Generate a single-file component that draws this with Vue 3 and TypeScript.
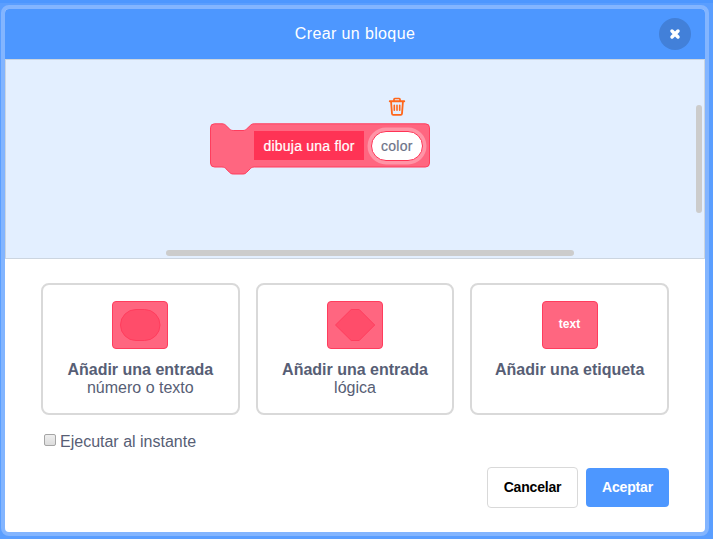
<script setup lang="ts">
import { ref } from 'vue'

interface InputOption {
  kind: 'round' | 'boolean' | 'label'
  title: string
  detail?: string
}

const options: InputOption[] = [
  { kind: 'round', title: 'Añadir una entrada', detail: 'número o texto' },
  { kind: 'boolean', title: 'Añadir una entrada', detail: 'lógica' },
  { kind: 'label', title: 'Añadir una etiqueta' },
]

const runInstantly = ref(false)
</script>

<template>
  <div class="overlay">
    <section class="modal">
      <header class="header">
        <h1 class="title">Crear un bloque</h1>
        <button class="close" aria-label="Cerrar">
          <svg width="12" height="12" viewBox="0 0 12 12">
            <path d="M3 3L9 9M9 3L3 9" stroke="#fff" stroke-width="3.5" stroke-linecap="round" />
          </svg>
        </button>
      </header>

      <div class="workspace">
        <svg class="canvas" width="698" height="198" viewBox="6 60 698 198">
          <path
            class="block"
            d="M210.500 127.800a4 4 0 0 1 4-4H222c2 0 3 .7 4 1.800l3.600 3.400c1 1 2 1.500 3.600 1.500H243c1.600 0 2.600-.5 3.600-1.500l3.600-3.400c1-1.100 2-1.800 4-1.800H425.500a4 4 0 0 1 4 4V163a4 4 0 0 1-4 4H254.200c-2 0-3 .7-4 1.800l-3.600 3.600c-1 1-2 1.600-3.600 1.600H233.200c-1.600 0-2.600-.6-3.600-1.600l-3.600-3.600c-1-1.100-2-1.800-4-1.800H214.500a4 4 0 0 1-4-4Z"
          />
          <rect x="254" y="131" width="110" height="29" fill="#ff3355" />
          <text class="block-text" x="263.500" y="151" textLength="91">dibuja una flor</text>
          <rect x="367.500" y="127.500" width="59" height="37" rx="18.500" fill="#fff" fill-opacity=".3" />
          <rect x="371.500" y="131.500" width="51" height="29" rx="14.500" fill="#fff" stroke="#ff3355" />
          <text class="arg-text" x="381" y="151" textLength="31.500">color</text>
          <g fill="none" stroke="#ff661a" stroke-linecap="round" stroke-linejoin="round">
            <path d="M389.800 101.200H404.200" stroke-width="2" />
            <path d="M394 100.800V99.300q0-.8.800-.8h4.400q.8 0 .8.800v1.500" stroke-width="1.700" />
            <path d="M391.100 102l.9 11.700q.1 1.100 1.200 1.100h7.600q1.100 0 1.200-1.100l.9-11.700" stroke-width="1.800" />
            <path d="M394.300 105.200v5M397 105.200v5M399.700 105.200v5" stroke-width="1.600" />
          </g>
          <rect x="696" y="105" width="6" height="108" rx="3" fill="#ccc" />
          <rect x="166" y="250" width="408" height="6" rx="3" fill="#ccc" />
        </svg>
      </div>

      <div class="body">
        <div class="options">
          <button v-for="option in options" :key="option.kind" class="option">
            <svg class="option-icon" width="56" height="48" viewBox="0 0 56 48">
              <rect x=".5" y=".5" width="55" height="47" rx="3.500" fill="#ff6680" stroke="#ff3d5d" />
              <rect v-if="option.kind === 'round'" class="slot" x="8.500" y="8.500" width="39.500" height="31" rx="15.500" />
              <path v-else-if="option.kind === 'boolean'" class="slot" d="M24.200 8.500h8L47.700 24l-15.500 15.500h-8L8.500 24Z" />
              <text v-else class="icon-text" x="27.500" y="27" text-anchor="middle">text</text>
            </svg>
            <strong>{{ option.title }}</strong>
            <span v-if="option.detail">{{ option.detail }}</span>
          </button>
        </div>

        <label class="check-row">
          <input v-model="runInstantly" class="check" type="checkbox" />
          <span>Ejecutar al instante</span>
        </label>

        <div class="actions">
          <button class="cancel">Cancelar</button>
          <button class="accept">Aceptar</button>
        </div>
      </div>
    </section>
  </div>
</template>

<style>
body {
  margin: 0;
  overflow: hidden;
}
</style>

<style scoped>
.overlay {
  box-sizing: border-box;
  width: 713px;
  height: 539px;
  padding: 5px 4px 3px 1px;
  background: linear-gradient(#4d97ff 3px, #5a9eff 3px);
  font-family: "Liberation Sans", Arial, sans-serif;
  color: #575e75;
}
button {
  margin: 0;
  font-family: inherit;
  color: inherit;
}
.modal {
  box-sizing: border-box;
  width: 708px;
  height: 531px;
  overflow: hidden;
  border: 4px solid #83b5ff;
  border-radius: 8px;
  background: #fff;
}
.header {
  display: grid;
  grid-template-columns: 1fr auto 1fr;
  align-items: center;
  height: 50px;
  padding: 0 14px;
  background: #4d97ff;
}
.title {
  grid-column: 2;
  margin: 0;
  font-size: 16px;
  font-weight: 400;
  line-height: 18px;
  letter-spacing: 0.38px;
  color: #fff;
}
.close {
  display: grid;
  place-items: center;
  justify-self: end;
  width: 32px;
  height: 32px;
  padding: 0;
  border: 0;
  border-radius: 50%;
  background: #4280d9;
}
.workspace {
  box-sizing: border-box;
  height: 200px;
  border: 1px solid #ccd5e0;
  background: #e3efff;
}
.canvas {
  display: block;
}
.block {
  fill: #ff6680;
  stroke: #ff3d5d;
}
.block-text,
.arg-text {
  font-size: 14px;
  fill: #fff;
  stroke: #fff;
  stroke-width: 0.2px;
}
.arg-text {
  fill: #6d7388;
  stroke: #6d7388;
}
.body {
  padding: 24px 36px;
}
.options {
  display: grid;
  grid-template-columns: repeat(3, 1fr);
  gap: 16px;
}
.option {
  display: flex;
  flex-direction: column;
  align-items: center;
  box-sizing: border-box;
  height: 132px;
  padding: 16px 0;
  border: 2px solid #d9d9d9;
  border-radius: 8px;
  background: #fff;
  font-size: 16px;
  line-height: 18px;
}
.option-icon {
  flex: none;
  margin-bottom: 12px;
}
.slot {
  fill: #ff4d6a;
  stroke: #ff3d5d;
}
.icon-text {
  font-size: 12px;
  font-weight: 700;
  fill: #fff;
}
.check-row {
  display: flex;
  align-items: center;
  gap: 4px;
  height: 18px;
  margin-top: 18px;
  padding-left: 3px;
  font-size: 16px;
  line-height: 18px;
}
.check {
  appearance: none;
  box-sizing: border-box;
  width: 12px;
  height: 12px;
  margin: 0 0 4px;
  border: 1px solid #a5a5a5;
  border-radius: 2px;
  background: linear-gradient(#eee, #dcdcdc);
}
.actions {
  display: flex;
  justify-content: flex-end;
  align-items: center;
  gap: 8px;
  margin-top: 16px;
}
.actions button {
  box-sizing: border-box;
  padding: 0 0 2px;
  border-radius: 4px;
  font-size: 14px;
  letter-spacing: -0.18px;
  font-weight: 700;
}
.actions .cancel {
  width: 91px;
  height: 41px;
  border: 1px solid #d9d9d9;
  background: #fff;
  color: #000;
}
.actions .accept {
  width: 83px;
  height: 39px;
  border: 0;
  background: #4d97ff;
  color: #fff;
}
</style>
